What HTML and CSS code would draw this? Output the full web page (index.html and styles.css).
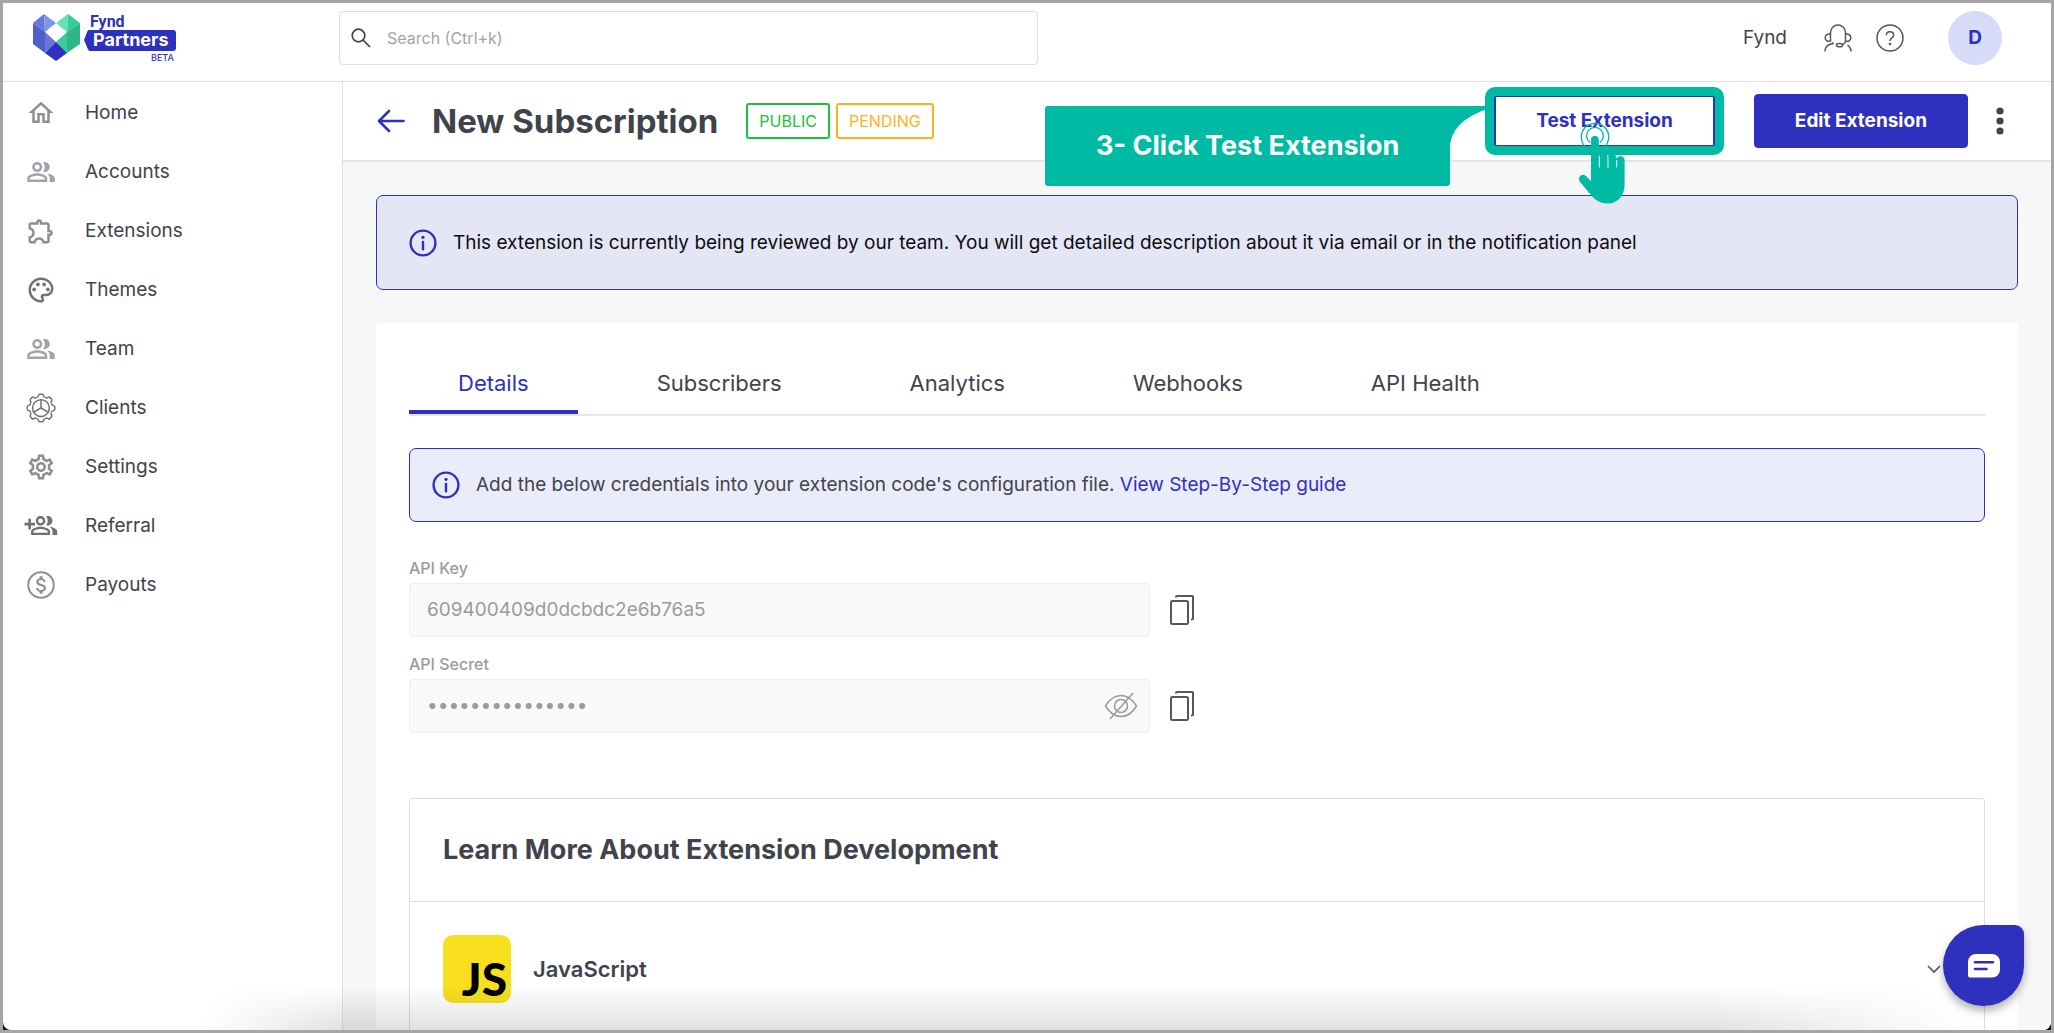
FILE: index.html
```html
<!DOCTYPE html>
<html lang="en">
<head>
  <meta charset="utf-8">
  <meta name="viewport" content="width=device-width, initial-scale=1">
  <title>New Subscription - Fynd Partners</title>
  <link rel="stylesheet" href="styles.css">
</head>
<body>
  <svg width="0" height="0" class="sprite" aria-hidden="true">
    <symbol id="i-people" viewBox="0 0 24 24"><path d="M16.67 13.13C18.04 14.06 19 15.32 19 17v3h4v-3c0-2.18-3.57-3.47-6.33-3.87zM15 12c2.21 0 4-1.79 4-4s-1.79-4-4-4c-.47 0-.91.1-1.33.24C14.5 5.27 15 6.58 15 8s-.5 2.73-1.33 3.76c.42.14.86.24 1.33.24zM9 12c2.21 0 4-1.79 4-4s-1.79-4-4-4-4 1.79-4 4 1.79 4 4 4zm0-6c1.1 0 2 .9 2 2s-.9 2-2 2-2-.9-2-2 .9-2 2-2zM9 13c-2.67 0-8 1.34-8 4v3h16v-3c0-2.66-5.33-4-8-4zm6 5H3v-.99C3.2 16.29 6.3 15 9 15s5.800 1.290 6 2v1z"/></symbol>
    <symbol id="i-info" viewBox="0 0 28 28"><circle cx="14" cy="14" r="12.4" fill="none" stroke="currentColor" stroke-width="2.4"/><circle cx="14" cy="8.3" r="1.6"/><rect x="12.8" y="11.8" width="2.4" height="9.6" rx="1"/></symbol>
    <symbol id="i-copy" viewBox="0 0 26 32"><g fill="none" stroke="currentColor" stroke-width="2"><rect x="2" y="7" width="17" height="23" rx="1.5"/><path d="M7 3.500V3a1 1 0 0 1 1-1h15a1 1 0 0 1 1 1v21.500a1 1 0 0 1-1 1h-1"/></g></symbol>
    <path id="tooth" d="M-3.500-8.500Q-2.300-8.600-2.100-9.700Q-1.900-11-1-11H1Q1.900-11 2.100-9.700Q2.300-8.600 3.500-8.500"/>
  </svg>

  <div class="app">
    <header class="topbar">
      <a class="brand" href="#" aria-label="Fynd Partners Beta">
        <svg width="144" height="50" viewBox="0 0 144 50">
          <path fill="#4f5fcb" d="M0 10l12 9v21L0 31z"/>
          <path fill="#6576dc" d="M0 10l11-9 1 18zM12 19l11 10-11 11z"/>
          <path fill="#8194e8" d="M11 1l12 9-11 9z"/>
          <path fill="#62e2b3" d="M23 10l12-9-1 18z"/>
          <path fill="#38cc9b" d="M35 1l12 9-13 9zM23 29l11-10v21z"/>
          <path fill="#30b488" d="M34 19l13-9v21l-13 9z"/>
          <path fill="#2e31be" d="M23 29l11 11-11 8-11-8z"/>
          <path fill="#2e31be" d="M56 17h84a3 3 0 0 1 3 3v15a3 3 0 0 1-3 3H58a3 3 0 0 1-3-1.500L51 27l3.500-9A2 2 0 0 1 56 17z"/>
          <text class="brand-fynd" x="57" y="14">Fynd</text>
          <text class="brand-partners" x="60" y="33">Partners</text>
          <text class="brand-beta" x="118" y="48">BETA</text>
        </svg>
      </a>
      <label class="search">
        <svg width="20" height="20" viewBox="0 0 20 20" fill="none" stroke="#41434c" stroke-width="1.700"><circle cx="7.500" cy="7.500" r="6.300"/><path d="M12 12l7 7"/></svg>
        <input type="search" placeholder="Search (Ctrl+k)" aria-label="Search">
      </label>
      <div class="account">
        <span class="org">Fynd</span>
        <button class="icon-btn" aria-label="Support">
          <svg width="28" height="28" viewBox="0 0 28 28" fill="none" stroke="#55565c" stroke-width="1.500"><path d="M6.500 17.500V8.500a7.500 7.500 0 0 1 15 0v9c-.6 2.200-1.500 3-3.500 3.500M6.500 10C3 9.600 1.200 11.500 1.200 13.800S3 17.600 6.500 17.200M21.500 10c3.500-.4 5.300 1.500 5.300 3.800s-1.800 3.800-5.300 3.400M8 18.500c.5.700 1 1 1.700 1.200M.8 27.500c.4-4.500 3-7.500 8.700-8M27.200 27.500c-.3-3-1.500-5-3.700-6.500"/><ellipse cx="15.500" cy="21.200" rx="3" ry="1.600"/></svg>
        </button>
        <button class="icon-btn" aria-label="Help">
          <svg width="28" height="28" viewBox="0 0 28 28" fill="none" stroke="#55565c" stroke-width="1.500"><circle cx="14" cy="14" r="13"/><path d="M10.300 11.300C10.300 9 11.800 7.700 14 7.700s3.700 1.300 3.700 3.400c0 2.700-3.700 3-3.700 6"/><circle cx="14" cy="20" r=".6"/></svg>
        </button>
        <button class="avatar" aria-label="Account">D</button>
      </div>
    </header>

    <div class="body">
      <nav class="sidebar">
        <a href="#"><svg viewBox="0 0 24 24"><path d="M12 5.690l5 4.500V18h-2v-6H9v6H7v-7.810l5-4.500M12 3L2 12h3v8h6v-6h2v6h6v-8h3L12 3z"/></svg>Home</a>
        <a href="#" class="light"><svg><use href="#i-people"/></svg>Accounts</a>
        <a href="#"><svg viewBox="0 0 24 24"><path d="M10.500 4.500c.28 0 .5.22.5.5v2h6v6h2c.28 0 .5.22.5.5s-.22.5-.5.5h-2v6h-2.120c-.68-1.750-2.390-3-4.380-3s-3.700 1.250-4.380 3H4v-2.120c1.750-.68 3-2.390 3-4.380 0-1.990-1.240-3.700-2.990-4.380L4 7h6V5c0-.28.22-.5.5-.5m0-2C9.120 2.500 8 3.620 8 5H4c-1.100 0-1.990.9-1.990 2v3.800h.29c1.490 0 2.700 1.210 2.700 2.700s-1.210 2.700-2.700 2.700H2V20c0 1.100.9 2 2 2h3.800v-.3c0-1.490 1.210-2.700 2.700-2.700s2.700 1.210 2.700 2.700v.3H17c1.100 0 2-.9 2-2v-4c1.380 0 2.500-1.120 2.500-2.500S20.380 11 19 11V7c0-1.100-.9-2-2-2h-4c0-1.380-1.120-2.500-2.500-2.500z"/></svg>Extensions</a>
        <a href="#" class="dark"><svg viewBox="0 0 24 24"><path d="M12 22C6.490 22 2 17.510 2 12S6.490 2 12 2s10 4.040 10 9c0 3.310-2.690 6-6 6h-1.770c-.28 0-.5.22-.5.5 0 .12.05.23.13.33.41.47.64 1.060.64 1.670A2.500 2.500 0 0112 22zm0-18c-4.410 0-8 3.590-8 8s3.590 8 8 8c.28 0 .5-.22.5-.5a.54.54 0 00-.14-.35c-.41-.46-.63-1.050-.63-1.650a2.500 2.500 0 012.500-2.500H16c2.210 0 4-1.790 4-4 0-3.860-3.590-7-8-7z"/><circle cx="6.500" cy="11.500" r="1.500"/><circle cx="9.500" cy="7.500" r="1.500"/><circle cx="14.500" cy="7.500" r="1.500"/><circle cx="17.500" cy="11.500" r="1.500"/></svg>Themes</a>
        <a href="#" class="light"><svg><use href="#i-people"/></svg>Team</a>
        <a href="#" class="dark"><svg viewBox="-12 -12 24 24"><g fill="none" stroke="currentColor" stroke-width="1.200"><use href="#tooth"/><use href="#tooth" transform="rotate(45)"/><use href="#tooth" transform="rotate(90)"/><use href="#tooth" transform="rotate(135)"/><use href="#tooth" transform="rotate(180)"/><use href="#tooth" transform="rotate(225)"/><use href="#tooth" transform="rotate(270)"/><use href="#tooth" transform="rotate(315)"/><circle r="6.700"/><path d="M0-6.700V0L-5.800 3.300M0 0l5.800 3.300"/></g></svg>Clients</a>
        <a href="#"><svg viewBox="0 0 24 24"><path d="M19.430 12.980c.04-.32.07-.64.07-.98 0-.34-.03-.66-.07-.98l2.110-1.650c.19-.15.24-.42.12-.64l-2-3.460a.5.5 0 00-.61-.22l-2.490 1c-.52-.4-1.080-.73-1.690-.98l-.38-2.650A.488.488 0 0014 2h-4c-.25 0-.46.18-.49.42l-.38 2.650c-.61.25-1.170.59-1.690.98l-2.490-1a.566.566 0 00-.18-.03c-.17 0-.34.09-.43.25l-2 3.460c-.13.22-.07.49.12.64l2.110 1.650c-.04.32-.07.65-.07.98 0 .33.03.66.07.98l-2.110 1.650c-.19.15-.24.42-.12.64l2 3.460a.5.5 0 00.61.22l2.490-1c.52.4 1.080.73 1.690.98l.38 2.650c.03.24.24.42.49.42h4c.25 0 .46-.18.49-.42l.38-2.650c.61-.25 1.170-.59 1.690-.98l2.490 1c.06.02.12.03.18.03.17 0 .34-.09.43-.25l2-3.460c.12-.22.07-.49-.12-.64l-2.110-1.650zm-1.980-1.710c.04.31.05.52.05.73 0 .21-.02.43-.05.73l-.14 1.130.89.7 1.080.84-.7 1.210-1.270-.51-1.040-.42-.9.68c-.43.32-.84.56-1.250.73l-1.060.43-.16 1.130-.2 1.350h-1.400l-.19-1.350-.16-1.130-1.060-.43c-.43-.18-.83-.41-1.230-.71l-.91-.7-1.060.43-1.270.51-.7-1.210 1.080-.84.89-.7-.14-1.130c-.03-.31-.05-.54-.05-.74s.02-.43.05-.73l.14-1.130-.89-.7-1.080-.84.7-1.210 1.270.51 1.040.42.9-.68c.43-.32.84-.56 1.250-.73l1.060-.43.16-1.130.2-1.350h1.390l.19 1.350.16 1.130 1.060.43c.43.18.83.41 1.230.71l.91.7 1.060-.43 1.270-.51.7 1.210-1.070.85-.89.7.14 1.130zM12 8c-2.210 0-4 1.790-4 4s1.790 4 4 4 4-1.790 4-4-1.790-4-4-4zm0 6c-1.100 0-2-.9-2-2s.9-2 2-2 2 .9 2 2-.9 2-2 2z"/></svg>Settings</a>
        <a href="#" class="dark"><svg viewBox="1.500 0 24 24" overflow="visible"><path d="M3.400 6.200h2.100v3.200h3.200v2.100H5.500v3.200H3.400v-3.200H.3V9.400h3.100z"/><g transform="translate(4.600 .2) scale(.95)"><path d="M16.670 13.130C18.040 14.060 19 15.320 19 17v3h4v-3c0-2.180-3.570-3.470-6.330-3.870zM15 12c2.210 0 4-1.790 4-4s-1.790-4-4-4c-.47 0-.91.1-1.330.24C14.500 5.270 15 6.580 15 8s-.5 2.730-1.330 3.760c.42.14.86.24 1.330.24zM9 12c2.210 0 4-1.790 4-4s-1.790-4-4-4-4 1.790-4 4 1.790 4 4 4zm0-6c1.100 0 2 .9 2 2s-.9 2-2 2-2-.9-2-2 .9-2 2-2zM9 13c-2.670 0-8 1.340-8 4v3h16v-3c0-2.660-5.330-4-8-4zm6 5H3v-.99C3.200 16.290 6.300 15 9 15s5.800 1.290 6 2v1z"/></g></svg>Referral</a>
        <a href="#"><svg viewBox="0 0 24 24"><circle cx="12" cy="12" r="10.200" fill="none" stroke="currentColor" stroke-width="1.600"/><path d="M12.310 11.140c-1.770-.45-2.340-.94-2.340-1.670 0-.84.79-1.430 2.100-1.430 1.380 0 1.900.66 1.940 1.640h1.710c-.05-1.340-.87-2.570-2.490-2.970V5H10.900v1.690c-1.510.32-2.720 1.300-2.720 2.810 0 1.790 1.490 2.690 3.660 3.210 1.950.46 2.340 1.150 2.340 1.870 0 .53-.39 1.390-2.100 1.390-1.600 0-2.230-.72-2.320-1.640H8.040c.1 1.700 1.360 2.660 2.860 2.970V19h2.340v-1.670c1.520-.29 2.720-1.160 2.730-2.770-.01-2.200-1.900-2.960-3.660-3.420z"/></svg>Payouts</a>
      </nav>

      <main class="main">
        <div class="page-head">
          <button class="icon-btn" aria-label="Back">
            <svg width="28" height="24" viewBox="0 0 28 24" fill="none" stroke="#2e31be" stroke-width="2.600" stroke-linecap="round" stroke-linejoin="round"><path d="M26.500 12H2M12 2L2 12l10 10"/></svg>
          </button>
          <h1>New Subscription</h1>
          <div class="badges"><span class="badge public">PUBLIC</span><span class="badge pending">PENDING</span></div>
          <div class="actions">
            <div class="guide">
              <button class="btn btn-outline">Test Extension</button>
              <div class="ring"></div>
              <div class="callout">
                <svg width="442" height="80" viewBox="0 0 442 80"><path fill="#00bba3" d="M3 0H442V3Q405 16 405 42V77a3 3 0 0 1-3 3H3a3 3 0 0 1-3-3V3a3 3 0 0 1 3-3z"/></svg>
                <span>3- Click Test Extension</span>
              </div>
              <svg class="hand" width="52" height="84" viewBox="0 0 52 84">
                <g fill="none" stroke="#00bba3" stroke-width="1.300"><path d="M10.500 28.500a13.700 13.700 0 1 1 15 0"/><path d="M13 22.500a8.400 8.400 0 1 1 10 0"/></g>
                <path fill="#00bba3" d="M14 20a3.900 3.900 0 0 1 7.800 0V37a3.700 3.700 0 0 1 8.800 0a3.700 3.700 0 0 1 8.800 2.500a4.100 4.100 0 0 1 8.200 1.500V65c0 11-7.500 18.500-17 18.500c-8 0-13-4-17.500-9.500L3.500 62.500C-.5 58 4.500 52 9 56l5 5z"/>
                <path fill="none" stroke="#e8faf7" stroke-width="1" d="M22.300 36V47.500M31 37V47.500M39.700 40V47.500"/>
              </svg>
            </div>
            <button class="btn btn-primary">Edit Extension</button>
            <button class="icon-btn more" aria-label="More options">
              <svg width="8" height="28" viewBox="0 0 8 28" fill="#41434c"><circle cx="4" cy="4" r="3.600"/><circle cx="4" cy="14" r="3.600"/><circle cx="4" cy="24" r="3.600"/></svg>
            </button>
          </div>
        </div>

        <div class="content">
          <div class="notice review"><svg><use href="#i-info"/></svg><p>This extension is currently being reviewed by our team. You will get detailed description about it via email or in the notification panel</p></div>

          <section class="panel">
            <div class="tabs" role="tablist">
              <button role="tab" aria-selected="true">Details</button>
              <button role="tab">Subscribers</button>
              <button role="tab">Analytics</button>
              <button role="tab">Webhooks</button>
              <button role="tab">API Health</button>
            </div>

            <div class="notice hint"><svg><use href="#i-info"/></svg><p>Add the below credentials into your extension code's configuration file. <a href="#">View Step-By-Step guide</a></p></div>

            <form class="credentials">
              <div class="field">
                <label for="api-key">API Key</label>
                <div class="field-row">
                  <div class="box"><input id="api-key" type="text" value="609400409d0dcbdc2e6b76a5" readonly></div>
                  <button type="button" class="icon-btn" aria-label="Copy API key"><svg width="26" height="32"><use href="#i-copy"/></svg></button>
                </div>
              </div>
              <div class="field">
                <label for="api-secret">API Secret</label>
                <div class="field-row">
                  <div class="box"><input id="api-secret" type="password" value="abcdefghijklmno" readonly>
                    <button type="button" class="icon-btn" aria-label="Show API secret"><svg width="34" height="28" viewBox="0 0 34 28" fill="none" stroke="#9b9b9b" stroke-width="1.500"><path d="M1.500 14C6 6.500 11 3.500 17 3.500S28 6.500 32.500 14C28 21.500 23 24.500 17 24.500S6 21.500 1.500 14z"/><circle cx="17" cy="14" r="6.500"/><path d="M29 1L6 27"/></svg></button>
                  </div>
                  <button type="button" class="icon-btn" aria-label="Copy API secret"><svg width="26" height="32"><use href="#i-copy"/></svg></button>
                </div>
              </div>
            </form>

            <section class="learn">
              <h2>Learn More About Extension Development</h2>
              <button class="topic">
                <span class="js">JS</span>
                <span class="topic-name">JavaScript</span>
                <svg width="14" height="9" viewBox="0 0 14 9" fill="none" stroke="#55565c" stroke-width="1.600"><path d="M1 1l6 6 6-6"/></svg>
              </button>
            </section>
          </section>
        </div>
      </main>
    </div>
    <div class="fade"></div>
    <button class="chat" aria-label="Open chat">
      <svg width="32" height="24" viewBox="0 0 32 24"><path fill="#fff" d="M8 0h16a8 8 0 0 1 8 8v7.500a8 8 0 0 1-8 8H2a2 2 0 0 1-2-2V8a8 8 0 0 1 8-8z"/><path stroke="#2e31be" stroke-width="2.600" stroke-linecap="round" d="M7 8.300h18M7 15h11.500"/></svg>
    </button>
  </div>
</body>
</html>
```
FILE: styles.css
```css
:root {
  --blue: #2e31be;
  --ink: #41434c;
  --muted: #9b9b9b;
  --line: #e4e5e6;
  --teal: #00bba3;
}

* { box-sizing: border-box; }

body {
  margin: 0;
  height: 100vh;
  border: 3px solid #a6a6a6;
  background: #14141c;
  color: var(--ink);
  font: 400 19px/24px Inter, "Liberation Sans", sans-serif;
}

button, input { font: inherit; color: inherit; }
a { color: inherit; text-decoration: none; }
h1, h2, p { margin: 0; }
svg { display: block; flex: none; }
.sprite { position: absolute; }

.app {
  position: relative;
  display: flex;
  flex-direction: column;
  height: 100%;
  overflow: hidden;
  border-radius: 0 0 8px 8px;
  background: #fff;
}

.icon-btn {
  display: flex;
  padding: 0;
  border: 0;
  background: none;
  cursor: pointer;
}

/* Top bar */
.topbar {
  display: flex;
  align-items: center;
  flex: none;
  padding: 8px 49px 16px 30px;
  border-bottom: 1px solid #dedfe0;
}

.brand { width: 306px; }
.brand-fynd { font: 700 16px "Liberation Sans Narrow", Roboto, sans-serif; fill: var(--blue); }
.brand-partners { font: 700 18px Inter, sans-serif; fill: #fff; }
.brand-beta { font: 500 9px Inter, sans-serif; fill: var(--blue); }

.search {
  display: flex;
  align-items: center;
  gap: 16px;
  width: 699px;
  height: 54px;
  padding: 0 11px;
  border: 1px solid #dedede;
  border-radius: 4px;
}
.search input {
  flex: 1;
  min-width: 0;
  padding: 0;
  border: 0;
  outline: 0;
  background: none;
  font-size: 16px;
}
.search input::placeholder { color: #a3a3a3; }

.account { display: flex; align-items: center; gap: 24px; margin-left: auto; }
.account .org { margin-right: 13px; }
.avatar {
  width: 54px;
  height: 54px;
  margin-left: 20px;
  padding: 0;
  border: 0;
  border-radius: 50%;
  background: #d6dbf8;
  color: var(--blue);
  font-weight: 700;
}

/* Sidebar */
.body { display: flex; flex: 1; min-height: 0; }
.sidebar {
  flex: none;
  width: 340px;
  padding-top: 1px;
  border-right: 1px solid #e2e2e2;
}
.sidebar a {
  display: flex;
  align-items: center;
  gap: 29px;
  height: 59px;
  padding-left: 23px;
}
.sidebar svg { width: 30px; height: 30px; color: #8e8f94; fill: currentColor; }
.sidebar .light svg { color: #a2a3a8; }
.sidebar .dark svg { color: #707175; }

/* Page header */
.main { flex: 1; min-width: 0; background: #f7f7f7; }
.page-head {
  display: flex;
  align-items: center;
  height: 80px;
  padding: 0 47px 0 34px;
  border-bottom: 2px solid var(--line);
  background: #fff;
}
h1 { margin-left: 27px; font-size: 33px; font-weight: 700; line-height: 40px; }
.badges { display: flex; gap: 6px; margin-left: 28px; }
.badge {
  padding: 4px 11px;
  border: 2px solid;
  border-radius: 3px;
  font-size: 16px;
}
.public { color: #20bf3d; }
.pending { color: #ffb21a; }

.actions { display: flex; align-items: center; margin-left: auto; }
.btn {
  height: 54px;
  padding: 0 40px;
  border: 1px solid var(--blue);
  border-radius: 4px;
  font-weight: 700;
}
.btn-outline { background: #fff; color: var(--blue); }
.btn-primary { background: var(--blue); color: #fff; }
.more { margin-left: 28px; }

/* Walkthrough overlay on the Test Extension button */
.guide { position: relative; z-index: 2; margin-right: 40px; }
.ring {
  position: absolute;
  inset: -7px -10px;
  border: 9px solid var(--teal);
  border-radius: 10px;
  box-shadow: inset 0 0 0 1px var(--blue);
}
.callout {
  position: absolute;
  top: 12px;
  right: 100%;
  width: 450px;
}
.callout span {
  position: absolute;
  top: 0;
  left: 0;
  width: 405px;
  color: #fff;
  font-size: 27px;
  font-weight: 700;
  line-height: 80px;
  text-align: center;
}
.hand { position: absolute; top: 26px; left: 82px; }

/* Content */
.content { padding: 33px; }
.notice {
  display: flex;
  align-items: center;
  gap: 16px;
  border: 1px solid var(--blue);
  border-radius: 7px;
}
.notice svg { width: 28px; height: 28px; color: var(--blue); fill: currentColor; }
.review { height: 95px; padding: 0 32px; background: #e4e6f5; color: #0c0c0e; }
.hint { height: 74px; padding: 0 22px; background: #eaecfa; }
.hint a { color: var(--blue); }

.panel {
  margin-top: 33px;
  padding: 33px;
  border-radius: 4px;
  background: #fff;
}

.tabs {
  display: flex;
  gap: 30px;
  margin-bottom: 32px;
  border-bottom: 2px solid var(--line);
}
.tabs button {
  height: 58px;
  padding: 0 49px;
  border: 0;
  border-bottom: 4px solid transparent;
  background: none;
  font-size: 22px;
}
.tabs button[aria-selected="true"] { border-bottom-color: var(--blue); color: var(--blue); }

.credentials { display: grid; gap: 17px; margin: 36px 0 65px; color: var(--muted); }
.field label {
  display: block;
  margin-bottom: 5px;
  font-size: 16px;
  font-weight: 500;
  line-height: 20px;
}
.field-row { display: flex; align-items: center; gap: 19px; }
.field-row > .icon-btn { color: #55575f; }
.box {
  display: flex;
  align-items: center;
  width: 47%;
  height: 54px;
  padding: 0 11px 0 17px;
  border: 1px solid #eee;
  border-radius: 4px;
  background: #f9f9f9;
}
.box input {
  flex: 1;
  min-width: 0;
  padding: 0;
  border: 0;
  outline: 0;
  background: none;
}

.learn { border: 1px solid #dcdde0; border-radius: 3px; }
h2 { padding: 34px 33px; font-size: 27px; font-weight: 700; line-height: 34px; }
.topic {
  display: flex;
  align-items: center;
  width: 100%;
  padding: 33px 43px 33px 33px;
  border: 0;
  border-top: 1px solid #dcdde0;
  background: none;
  text-align: left;
}
.js {
  display: flex;
  align-items: flex-end;
  justify-content: flex-end;
  width: 68px;
  height: 68px;
  padding: 0 4px 0 0;
  border-radius: 10px;
  background: #f7df1e;
  color: #000;
  font: 900 46px/48px Lato, sans-serif;
}
.topic-name { flex: 1; margin-left: 22px; font-size: 22px; font-weight: 600; }

/* Shade over the lower edge of the window */
.fade {
  position: absolute;
  inset: auto 80px 0 200px;
  height: 44px;
  background: linear-gradient(transparent, rgba(0, 0, 0, 0.12));
  mask-image: linear-gradient(90deg, transparent, #000 8%, #000 85%, transparent);
  pointer-events: none;
}

.chat {
  position: absolute;
  right: 27px;
  bottom: 24px;
  display: grid;
  place-items: center;
  width: 81px;
  height: 81px;
  padding: 0;
  border: 0;
  border-radius: 50% 9px 50% 50%;
  background: var(--blue);
  box-shadow: 0 5px 8px rgba(0, 0, 0, 0.3);
}
```
